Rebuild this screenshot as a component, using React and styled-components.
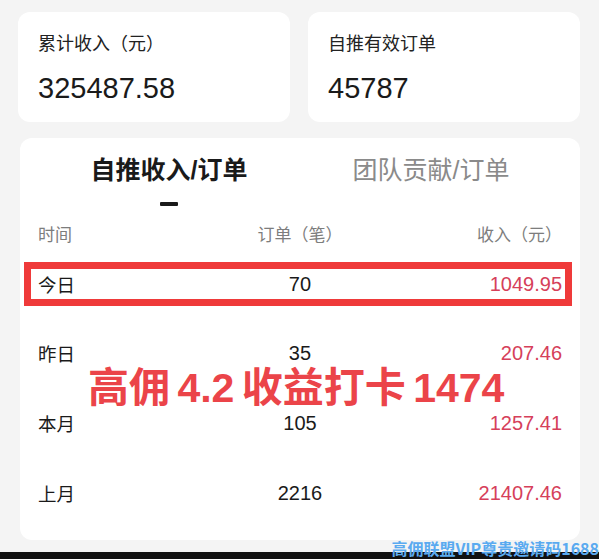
import React from 'react';
import styled, { createGlobalStyle } from 'styled-components';

const GlobalStyle = createGlobalStyle`
  html, body {
    margin: 0;
    padding: 0;
    background: #f4f4f4;
    font-family: "Liberation Sans", "Noto Sans CJK SC", sans-serif;
    color: #222;
  }
`;

const stats = [
  { label: '累计收入（元）', value: '325487.58' },
  { label: '自推有效订单', value: '45787' },
];

const rows = [
  { time: '昨日', orders: '35', income: '207.46' },
  { time: '本月', orders: '105', income: '1257.41' },
  { time: '上月', orders: '2216', income: '21407.46' },
];

const App = () => {
  return (
    <Page>
      <GlobalStyle />
      <StatRow>
        {stats.map((s) => (
          <StatCard key={s.label}>
            <StatLabel>{s.label}</StatLabel>
            <StatValue>{s.value}</StatValue>
          </StatCard>
        ))}
      </StatRow>

      <MainCard>
        <Tabs>
          <Tab active>
            自推收入/订单
            <Indicator />
          </Tab>
          <Tab>团队贡献/订单</Tab>
        </Tabs>

        <HeaderRow>
          <Cell>时间</Cell>
          <Cell align="center">订单（笔）</Cell>
          <Cell align="right">收入（元）</Cell>
        </HeaderRow>

        <Highlight>
          <Cell>今日</Cell>
          <Num align="center">70</Num>
          <Income>1049.95</Income>
        </Highlight>

        <Body>
          {rows.map((r) => (
            <DataRow key={r.time}>
              <Cell>{r.time}</Cell>
              <Num align="center">{r.orders}</Num>
              <Income>{r.income}</Income>
            </DataRow>
          ))}
        </Body>

        <Stamp>高佣 4.2 收益打卡 1474</Stamp>
      </MainCard>

      <Footer>
        <Watermark>高佣联盟VIP尊贵邀请码1688</Watermark>
      </Footer>
    </Page>
  );
};

const Page = styled.div`
  width: 599px;
  height: 559px;
  overflow: hidden;
  display: flex;
  flex-direction: column;
  box-sizing: border-box;
  padding-top: 12px;
`;

const StatRow = styled.div`
  display: grid;
  grid-template-columns: 272px 272px;
  gap: 18px;
  padding: 0 19px 0 18px;
`;

const StatCard = styled.div`
  height: 110px;
  background: #fff;
  border-radius: 12px;
  box-sizing: border-box;
  padding: 20px 20px 0;
`;

const StatLabel = styled.div`
  font-size: 18px;
  line-height: 24px;
  color: #222;
`;

const StatValue = styled.div`
  margin-top: 15px;
  font-size: 29px;
  line-height: 34px;
  font-weight: 500;
  color: #1a1a1a;
`;

const MainCard = styled.div`
  position: relative;
  margin: 16px 19px 0 20px;
  height: 402px;
  background: #fff;
  border-radius: 12px;
  box-sizing: border-box;
  padding: 16px 18px 0;
`;

const Tabs = styled.div`
  display: flex;
  margin: 0 -18px;
  padding: 0 18px;
`;

const Tab = styled.div`
  flex: 1;
  display: flex;
  flex-direction: column;
  align-items: center;
  font-size: 25px;
  line-height: 32px;
  font-weight: ${(p) => (p.active ? 700 : 400)};
  color: ${(p) => (p.active ? '#1a1a1a' : '#8a8a8a')};
`;

const Indicator = styled.div`
  width: 18px;
  height: 4px;
  background: #1a1a1a;
  border-radius: 1px;
  margin-top: 16px;
`;

const rowGrid = `
  display: grid;
  grid-template-columns: 1fr 1fr 1fr;
  align-items: center;
`;

const HeaderRow = styled.div`
  ${rowGrid}
  height: 40px;
  margin-top: 7px;
  font-size: 17px;
  color: #7d7d7d;
`;

const Cell = styled.div`
  text-align: ${(p) => p.align || 'left'};
  white-space: nowrap;
`;

const Num = styled(Cell)`
  font-size: 20px;
`;

const Income = styled(Num).attrs({ align: 'right' })`
  color: #d6405a;
`;

const Highlight = styled.div`
  ${rowGrid}
  margin: 9px -10px 0 -14px;
  height: 44px;
  box-sizing: border-box;
  border: 7px solid #ef3a3a;
  padding: 0 3px 0 7px;
  font-size: 18.5px;
  color: #1a1a1a;
`;

const Body = styled.div`
  display: flex;
  flex-direction: column;
  margin-top: 12px;
`;

const DataRow = styled.div`
  ${rowGrid}
  height: 70px;
  font-size: 18.5px;
  color: #1a1a1a;
`;

const Stamp = styled.div`
  position: absolute;
  left: 68px;
  top: 226px;
  font-size: 41px;
  line-height: 48px;
  font-weight: 700;
  color: #eb4449;
  white-space: nowrap;
  word-spacing: -4px;
`;

const Footer = styled.div`
  position: relative;
  margin-top: auto;
  height: 7px;
  background: #111;
`;

const Watermark = styled.div`
  position: absolute;
  right: 0;
  bottom: 1px;
  font-size: 16px;
  line-height: 20px;
  font-weight: 700;
  font-family: "Noto Sans CJK SC", sans-serif;
  color: #5aaaf0;
  white-space: nowrap;
`;

export default App;
